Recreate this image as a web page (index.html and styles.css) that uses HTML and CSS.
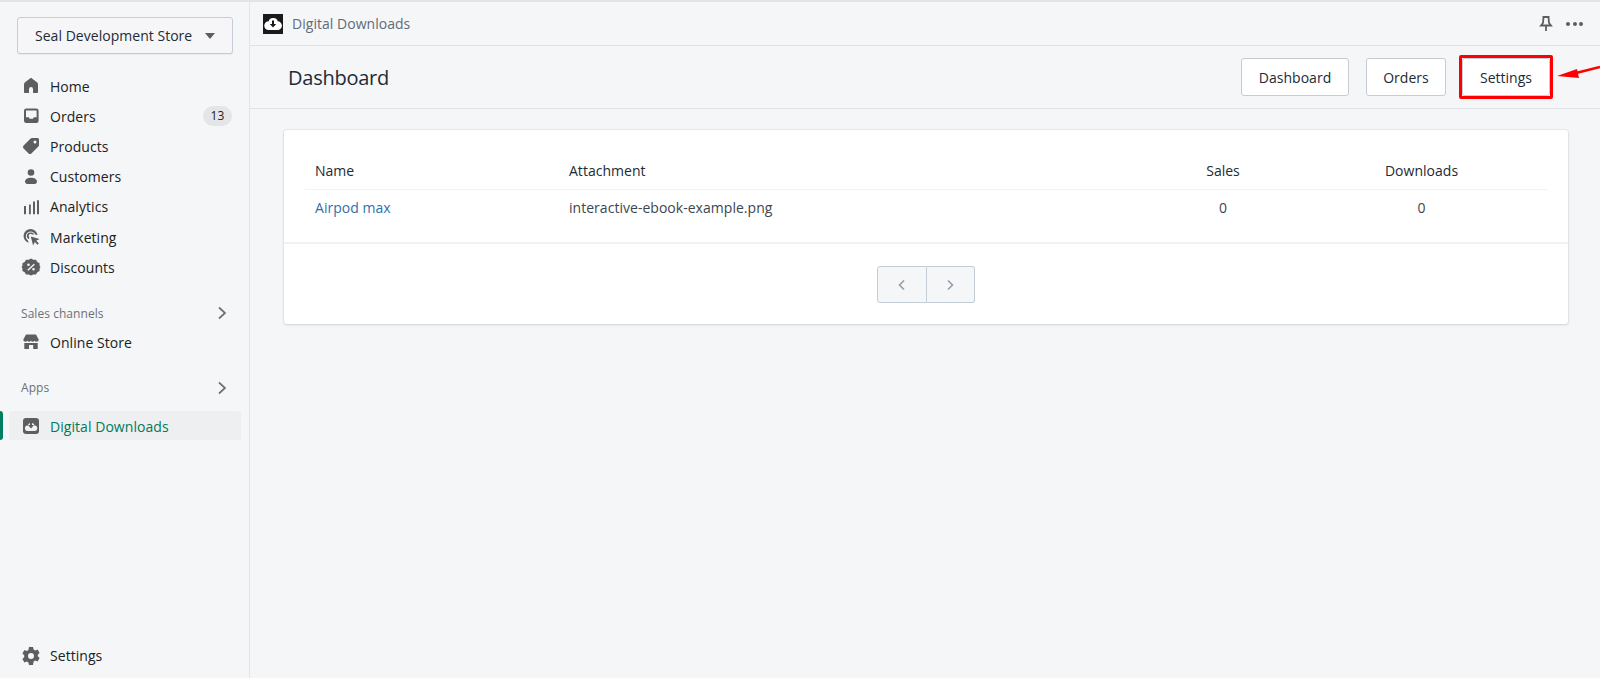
FILE: index.html
```html
<!DOCTYPE html>
<html lang="en">
<head>
<meta charset="utf-8">
<title>Digital Downloads</title>
<link rel="stylesheet" href="styles.css">
</head>
<body>
<div class="app">
  <aside class="sidebar">
    <button class="store-btn"><span>Seal Development Store</span><svg class="caret" width="10" height="6" viewBox="0 0 10 6"><path d="M0 0h10L5 6z"/></svg></button>
    <nav class="nav main-nav">
      <a class="item"><svg class="ico" viewBox="0 0 20 20"><path d="M10 1.800 4 6.200C3.300 6.800 3 7.500 3 8.300V16c0 .6.400 1 1 1h4v-4a2 2 0 0 1 4 0v4h4c.6 0 1-.4 1-1V8.300c0-.8-.3-1.500-1-2.100z"/></svg><span>Home</span></a>
      <a class="item"><svg class="ico" viewBox="0 0 20 20"><path fill-rule="evenodd" d="M5.300 2.500h10A2.300 2.300 0 0 1 17.600 4.800v10a2.300 2.300 0 0 1-2.300 2.300h-10A2.300 2.300 0 0 1 3 14.800v-10A2.300 2.300 0 0 1 5.300 2.500zM5 4.500v6.700h2.800l.9 1.500h3.200l.9-1.500h2.800V4.500z"/></svg><span>Orders</span><em class="badge">13</em></a>
      <a class="item"><svg class="ico" viewBox="0 0 20 20"><path fill-rule="evenodd" d="M11 2h5.500c.8 0 1.500.7 1.500 1.500V9c0 .5-.2 1-.6 1.400l-7 7c-.8.800-2 .800-2.800 0l-5-5c-.8-.8-.8-2 0-2.800l7-7C10 2.200 10.500 2 11 2zm3 5.500a1.500 1.500 0 1 0 0-3 1.500 1.500 0 0 0 0 3z"/></svg><span>Products</span></a>
      <a class="item"><svg class="ico" viewBox="0 0 20 20"><circle cx="10" cy="5.500" r="3.300"/><path d="M4 14.500c0-2.200 2.700-3.800 6-3.800s6 1.600 6 3.800c0 1.400-1.100 2.500-2.300 2.500H6.300C5.100 17 4 15.900 4 14.500z"/></svg><span>Customers</span></a>
      <a class="item"><svg class="ico" viewBox="0 0 20 20"><path d="M3 9h2v8.300H3zM8 7.500h1.800v9.800H8zM12 4.600h2v12.700h-2zM16 3.300h2v14h-2z"/></svg><span>Analytics</span></a>
      <a class="item"><svg class="ico" viewBox="0 0 20 20"><path d="M9.500 2a7 7 0 0 0-2 13.700l-.4-2A5 5 0 1 1 14.500 7.800l2 .3A7 7 0 0 0 9.500 2z"/><path d="M9.500 5.500a3.500 3.500 0 0 0-1.300 6.800V10.200A1.800 1.800 0 1 1 11 7.500h2.200a3.500 3.500 0 0 0-3.700-2z"/><path d="M9.800 9.500 18.500 12l-3.300 1.700 2.700 2.700-1.400 1.400-2.700-2.700-1.700 3.300z"/></svg><span>Marketing</span></a>
      <a class="item"><svg class="ico" viewBox="0 0 20 20"><path fill-rule="evenodd" d="M10 1.500 12.300 2.800 15 2.700l1.300 2.200 2.300 1.400v2.600L19.500 10l-.9 1.600v2.300l-2.300 1.300-1.300 2.300-2.700-.1L10 18.500l-2.300-1.100-2.700.1-1.300-2.300-2.300-1.300v-2.300L.5 10l.9-1.100V6.300l2.300-1.400L5 2.700l2.700.1zM7.500 6.500a1.300 1.300 0 1 0 0 2.600 1.300 1.300 0 0 0 0-2.600zm5 4.500a1.300 1.300 0 1 0 0 2.600 1.300 1.300 0 0 0 0-2.600zm.300-4.300-6.500 6 1 1.100 6.500-6z"/></svg><span>Discounts</span></a>
    </nav>
    <div class="section-head first"><span>Sales channels</span><svg class="chev" width="10" height="14" viewBox="0 0 10 14"><path d="M2 1.500 8 7l-6 5.500"/></svg></div>
    <a class="item"><svg class="ico" viewBox="0 0 20 20"><path d="M5 2.500h10L17.700 7.500c0 1.300-1 2.300-2.200 2.300-.8 0-1.500-.4-1.900-1-.5.6-1.100 1-1.800 1s-1.300-.4-1.800-1c-.5.6-1.100 1-1.800 1s-1.300-.4-1.800-1c-.4.6-1.100 1-1.900 1-1.200 0-2.200-1-2.200-2.300z"/><path fill-rule="evenodd" d="M3.300 11h13.400v6h-4.500v-4H8v4H3.300z"/></svg><span>Online Store</span></a>
    <div class="section-head second"><span>Apps</span><svg class="chev" width="10" height="14" viewBox="0 0 10 14"><path d="M2 1.500 8 7l-6 5.500"/></svg></div>
    <a class="item active"><svg class="ico" viewBox="0 0 20 20"><rect x="2" y="2" width="16" height="16" rx="3"/><path fill="#f1f2f4" d="M10 7a3.300 3.300 0 0 0-3.200 2.400A2.600 2.600 0 0 0 6.600 15h6.800a2.600 2.600 0 0 0 .2-5.600A3.300 3.300 0 0 0 10 7z"/><path d="M9 4.500h2V9h2l-3 3.600L7 9h2z"/></svg><span>Digital Downloads</span></a>
    <a class="item bottom"><svg class="ico" viewBox="0 0 20 20"><path fill-rule="evenodd" d="M8 1h4l.6 2.500 1.600.9 2.400-.8 2 3.500-1.800 1.700v1.400l1.800 1.700-2 3.500-2.400-.8-1.600.9L12 19H8l-.6-2.500-1.600-.9-2.400.8-2-3.500 1.800-1.700V9.300L1.400 7.600l2-3.500 2.400.8 1.600-.9zM10 7a3 3 0 1 0 0 6 3 3 0 0 0 0-6z"/></svg><span>Settings</span></a>
  </aside>
  <main class="main">
    <header class="topbar">
      <div class="app-logo"><svg width="20" height="20" viewBox="0 0 20 20"><path fill="#fff" d="M10 4a4.500 4.500 0 0 0-4.300 3.300A3.500 3.500 0 0 0 5.500 16h9a3.500 3.500 0 0 0 .2-8.700A4.500 4.500 0 0 0 10 4z"/><path fill="#1a1a1a" d="M9 6.500h2V10h2.200L10 13.500 6.800 10H9z"/></svg></div>
      <span class="app-name">Digital Downloads</span>
      <div class="top-actions">
        <svg class="pin" width="14" height="18" viewBox="0 0 14 18"><path d="M3.500 2h7M4.500 2l-.5 6-2 2.500h10L10 8l-.5-6M7 10.500V16"/></svg>
        <div class="dots"><i></i><i></i><i></i></div>
      </div>
    </header>
    <section class="pagehead">
      <h1>Dashboard</h1>
      <div class="tabs">
        <a class="btn dash">Dashboard</a>
        <a class="btn ord">Orders</a>
        <a class="btn set">Settings</a>
      </div>
      <svg class="arrow" width="48" height="26" viewBox="0 0 48 26"><path d="M48 11 24 17" stroke="#f00" stroke-width="2.500" fill="none"/><path d="M5 20 25 13 27 22z" fill="#f00"/></svg>
    </section>
    <div class="content">
      <section class="card">
        <div class="table-wrap">
          <table>
            <thead>
              <tr><th class="c1">Name</th><th class="c2">Attachment</th><th class="c3">Sales</th><th class="c4">Downloads</th></tr>
            </thead>
            <tbody>
              <tr><td class="c1"><a class="link">Airpod max</a></td><td class="c2">interactive-ebook-example.png</td><td class="c3">0</td><td class="c4">0</td></tr>
            </tbody>
          </table>
        </div>
        <div class="pager-row">
          <div class="pager">
            <span class="pg"><svg width="10" height="12" viewBox="0 0 10 12"><path d="M7 1.500 2.500 6 7 10.500"/></svg></span>
            <span class="pg"><svg width="10" height="12" viewBox="0 0 10 12"><path d="M3 1.500 7.500 6 3 10.500"/></svg></span>
          </div>
        </div>
      </section>
    </div>
  </main>
</div>
</body>
</html>
```
FILE: styles.css
```css
* { box-sizing: border-box; }
html, body { margin: 0; height: 678px; overflow: hidden; }
body {
  font-family: "Open Sans", "Noto Sans", "Liberation Sans", sans-serif;
  font-size: 14px;
  color: #212b36;
  background: #f4f6f8;
}
.app {
  display: grid;
  grid-template-columns: 250px 1fr;
  height: 678px;
  border-top: 2px solid #e3e4e6;
}
.sidebar {
  display: flex;
  flex-direction: column;
  border-right: 1px solid #e2e5e8;
  padding-top: 15px;
  height: 676px;
}
.store-btn {
  width: 216px;
  height: 37px;
  margin-left: 17px;
  display: flex;
  align-items: center;
  justify-content: space-between;
  padding: 0 17px;
  background: #f6f6f8;
  border: 1px solid #c4cdd5;
  border-radius: 3px;
  box-shadow: 0 1px 0 rgba(22,29,37,.05);
  font: inherit;
  font-size: 14px;
  letter-spacing: .03px;
  color: #212b36;
}
.caret { fill: #5c5f62; }
.nav { margin-top: 17px; }
.item {
  display: flex;
  align-items: center;
  height: 30.2px;
  padding-left: 21px;
  margin-right: 8px;
  letter-spacing: .05px;
  color: #202223;
  position: relative;
  flex: none;
}
.ico { width: 20px; height: 20px; fill: #5c5f62; margin-right: 9px; flex: none; }
.badge {
  margin-left: auto;
  margin-right: 9px;
  width: 29px;
  height: 20px;
  border-radius: 10px;
  background: #e4e5e7;
  font-style: normal;
  font-size: 12px;
  text-align: center;
  line-height: 20px;
}
.section-head {
  display: flex;
  align-items: center;
  justify-content: space-between;
  height: 20px;
  padding: 0 22px 0 21px;
  font-size: 12px;
  letter-spacing: .05px;
  color: #6d7175;
  flex: none;
}
.section-head.first { margin-top: 21px; margin-bottom: 4px; }
.section-head.second { margin-top: 20px; margin-bottom: 13px; }
.chev { fill: none; stroke: #6d7175; stroke-width: 1.700; }
.item.active {
  height: 29px;
  margin-left: 9px;
  padding-left: 12px;
  padding-top: 2px;
  background: #eeeff1;
  border-radius: 3px;
  color: #007a5a;
}
.item.active::before {
  content: "";
  position: absolute;
  left: -9px;
  top: 0;
  bottom: 0;
  width: 3px;
  background: #008060;
  border-radius: 0 3px 3px 0;
}
.item.bottom { margin-top: auto; margin-bottom: 7px; }
.main { display: flex; flex-direction: column; min-width: 0; }
.topbar {
  height: 44px;
  display: flex;
  align-items: center;
  padding: 0 17px 0 13px;
  border-bottom: 1px solid #dfe3e8;
  flex: none;
}
.app-logo {
  width: 20px;
  height: 20px;
  background: #1a1a1a;
  margin-right: 9px;
  display: flex;
}
.app-name { color: #5f6c76; letter-spacing: .03px; }
.top-actions { margin-left: auto; display: flex; align-items: center; gap: 13px; }
.pin { fill: none; stroke: #5c5f62; stroke-width: 1.800; }
.dots { display: flex; gap: 2.500px; }
.dots i { width: 4px; height: 4px; border-radius: 50%; background: #5c5f62; }
.pagehead {
  height: 63px;
  display: flex;
  align-items: center;
  justify-content: space-between;
  padding: 0 50px 0 38px;
  border-bottom: 1px solid #dfe3e8;
  position: relative;
  flex: none;
}
h1 { margin: 0; font-size: 20px; font-weight: 400; letter-spacing: -.25px; color: #212b36; }
.tabs { display: flex; align-items: center; }
.btn {
  display: flex;
  align-items: center;
  justify-content: center;
  height: 38px;
  background: #fff;
  border: 1px solid #c4cdd5;
  border-radius: 3px;
  letter-spacing: .03px;
  color: #212b36;
  position: relative;
}
.dash { width: 108px; margin-right: 17px; }
.ord { width: 80px; margin-right: 16px; }
.set { width: 88px; }
.set::after {
  content: "";
  position: absolute;
  inset: -4px;
  border: 3px solid #f00;
  border-radius: 2px;
}
.arrow { position: absolute; right: 0; top: 10px; }
.content { padding: 21px 32px 0 34px; }
.card {
  background: #fff;
  border-radius: 3px;
  box-shadow: 0 0 0 1px rgba(63,63,68,.05), 0 1px 3px rgba(63,63,68,.15);
  height: 194px;
}
.table-wrap { padding: 21px 21px 0; height: 114px; border-bottom: 2px solid #eff1f3; }
table { width: 100%; border-collapse: collapse; table-layout: fixed; }
th { font-weight: 400; letter-spacing: .02px; height: 38px; padding-top: 3px; text-align: left; border-bottom: 1px solid #f1f2f4; color: #212b36; }
td { height: 37px; letter-spacing: .03px; color: #3c4650; }
.c1 { width: 263px; padding-left: 10px; }
.c2 { width: 582px; }
.c3 { width: 146px; text-align: center; }
.c4 { text-align: center; }
.link { color: #2f6fae; }
.pager-row { display: flex; justify-content: center; padding-top: 22px; }
.pager { display: flex; width: 98px; height: 37px; }
.pg {
  flex: 1;
  display: flex;
  align-items: center;
  justify-content: center;
  background: #f4f6f8;
  border: 1px solid #c4cdd5;
}
.pg:first-child { border-radius: 3px 0 0 3px; }
.pg:last-child { border-radius: 0 3px 3px 0; border-left: 0; }
.pg svg { fill: none; stroke: #919eab; stroke-width: 1.600; }
```
